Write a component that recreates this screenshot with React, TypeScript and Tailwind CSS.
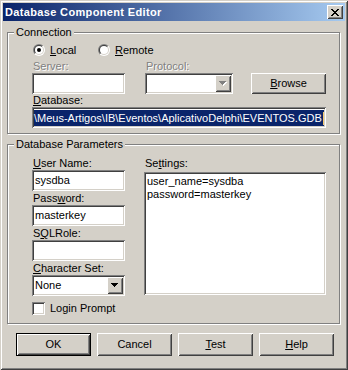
import React from "react";

const FONT = { fontFamily: '"Liberation Sans", Arial, sans-serif' };

const sunken =
  "shadow-[inset_1px_1px_0_#808080,inset_-1px_-1px_0_#ffffff,inset_2px_2px_0_#404040,inset_-2px_-2px_0_#d4d0c8]";
const raised =
  "shadow-[inset_1px_1px_0_#ffffff,inset_-1px_-1px_0_#404040,inset_2px_2px_0_#d4d0c8,inset_-2px_-2px_0_#808080]";

function Radio({ checked }: { checked?: boolean }) {
  return (
    <div className="w-[12px] h-[12px] rounded-full bg-[linear-gradient(135deg,#808080_50%,#ffffff_50%)] p-[1px] shrink-0">
      <div className="w-full h-full rounded-full bg-[linear-gradient(135deg,#404040_50%,#d4d0c8_50%)] p-[1px]">
        <div className="w-full h-full rounded-full bg-white flex items-center justify-center">
          {checked && <div className="w-[4px] h-[4px] rounded-full bg-black" />}
        </div>
      </div>
    </div>
  );
}

function Arrow({ disabled }: { disabled?: boolean }) {
  const c = disabled ? "#808080" : "#000000";
  const rows = [7, 5, 3, 1];
  return (
    <svg width="8" height="5" viewBox="0 0 8 5" shapeRendering="crispEdges">
      {disabled &&
        rows.map((w, i) => (
          <rect key={"s" + i} x={(7 - w) / 2 + 1} y={i + 1} width={w} height={1} fill="#ffffff" />
        ))}
      {rows.map((w, i) => (
        <rect key={i} x={(7 - w) / 2} y={i} width={w} height={1} fill={c} />
      ))}
    </svg>
  );
}

function Combo({ w, value, disabled }: { w: string; value?: string; disabled?: boolean }) {
  return (
    <div className={`relative h-[21px] bg-white ${sunken} ${w} flex items-center pl-[3px] text-[11px] leading-[13px] text-black`}>
      {value}
      <div className={`absolute right-[2px] top-[2px] w-[16px] h-[17px] bg-[#d4d0c8] ${raised} flex items-center justify-center`}>
        <Arrow disabled={disabled} />
      </div>
    </div>
  );
}

function Edit({ w, value }: { w: string; value?: string }) {
  return (
    <div className={`h-[21px] bg-white ${sunken} ${w} flex items-center pl-[3px] text-[11px] leading-[13px] text-black`}>
      {value}
    </div>
  );
}

function Label({ children, disabled, h = "h-[13px]" }: { children: React.ReactNode; disabled?: boolean; h?: string }) {
  return (
    <div
      className={`${h} ml-[1px] text-[11px] leading-[13px] flex items-end whitespace-nowrap ${
        disabled ? "text-[#808080] [text-shadow:1px_1px_0_#ffffff]" : "text-black"
      }`}
    >
      <span>{children}</span>
    </div>
  );
}

function Group({ label, className, children }: { label: string; className: string; children: React.ReactNode }) {
  return (
    <div
      className={`relative w-[333px] border border-[#808080] shadow-[1px_1px_0_#ffffff,inset_1px_1px_0_#ffffff] ${className}`}
    >
      <div className="absolute left-[6px] top-[-7px] px-[2px] bg-[#d4d0c8] text-[11px] leading-[13px] text-black whitespace-nowrap">
        {label}
      </div>
      {children}
    </div>
  );
}

function Button({ children, def }: { children: React.ReactNode; def?: boolean }) {
  return (
    <div
      className={`w-[75px] h-[23px] bg-[#d4d0c8] flex items-center justify-center text-[11px] leading-[13px] text-black ${
        def ? "border border-black" : ""
      } ${raised}`}
    >
      <span>{children}</span>
    </div>
  );
}

function CloseGlyph() {
  const px: [number, number][] = [
    [0, 0], [1, 0], [6, 0], [7, 0],
    [1, 1], [2, 1], [5, 1], [6, 1],
    [2, 2], [3, 2], [4, 2], [5, 2],
    [3, 3], [4, 3],
    [2, 4], [3, 4], [4, 4], [5, 4],
    [1, 5], [2, 5], [5, 5], [6, 5],
    [0, 6], [1, 6], [6, 6], [7, 6],
  ];
  return (
    <svg width="8" height="7" viewBox="0 0 8 7" shapeRendering="crispEdges">
      {px.map(([x, y], i) => (
        <rect key={i} x={x} y={y} width={1} height={1} fill="#000" />
      ))}
    </svg>
  );
}

export default function App() {
  return (
    <div
      className="w-[348px] h-[370px] bg-[#d4d0c8] p-[3px] shadow-[inset_1px_1px_0_#d4d0c8,inset_-1px_-1px_0_#404040,inset_2px_2px_0_#ffffff,inset_-2px_-2px_0_#808080] select-none"
      style={FONT}
    >
      {/* Title bar */}
      <div className="h-[18px] flex items-center justify-between bg-[linear-gradient(90deg,#0a246a,#a6caf0)] pl-[2px] pr-[2px]">
        <span className="text-white font-bold text-[11px] leading-[13px] tracking-[0.35px]">
          Database Component Editor
        </span>
        <div className={`w-[16px] h-[14px] bg-[#d4d0c8] ${raised} flex items-center justify-center`}>
          <CloseGlyph />
        </div>
      </div>

      <div className="pl-[4px] pt-[11px]">
        {/* Connection */}
        <Group label="Connection" className="h-[102px]">
          <div className="pl-[24px] pt-[11px]">
            <div className="flex items-center h-[12px] text-[11px] leading-[13px] text-black">
              <div className="flex items-center w-[65px] ml-[1px]">
                <Radio checked />
                <span className="ml-[5px]">
                  <u>L</u>ocal
                </span>
              </div>
              <div className="flex items-center">
                <Radio />
                <span className="ml-[5px]">
                  <u>R</u>emote
                </span>
              </div>
            </div>
            <div className="flex mt-[4px]">
              <div className="flex flex-col w-[93px]">
                <Label disabled>Server:</Label>
                <Edit w="w-[93px]" />
              </div>
              <div className="flex flex-col w-[88px] ml-[20px]">
                <Label disabled>Protocol:</Label>
                <Combo w="w-[88px]" disabled />
              </div>
              <div className="pt-[13px] ml-[18px]">
                <div className={`w-[75px] h-[21px] bg-[#d4d0c8] ${raised} flex items-center justify-center text-[11px] leading-[13px] text-black`}>
                  <span>
                    <u>B</u>rowse
                  </span>
                </div>
              </div>
            </div>
            <Label>
              <u>D</u>atabase:
            </Label>
            <div className={`h-[21px] w-[294px] bg-white ${sunken} pl-[2px] pr-[3px] flex items-center overflow-hidden`}>
              <span className="relative inline-block h-[16px] leading-[16px] pr-[2px] bg-[#0a246a] text-white text-[11px] whitespace-nowrap">
                \Meus-Artigos\IB\Eventos\AplicativoDelphi\EVENTOS.GDB
                <span className="absolute right-0 top-[2px] w-[1px] h-[13px] bg-[#f5c870]" />
              </span>
            </div>
          </div>
        </Group>

        {/* Database Parameters */}
        <Group label="Database Parameters" className="h-[180px] mt-[10px]">
          <div className="pl-[24px] pt-[11px] flex">
            <div className="flex flex-col w-[93px]">
              <Label h="h-[14px]">
                <u>U</u>ser Name:
              </Label>
              <Edit w="w-[93px]" value="sysdba" />
              <Label h="h-[14px]">
                Pass<u>w</u>ord:
              </Label>
              <Edit w="w-[93px]" value="masterkey" />
              <Label h="h-[14px]">
                S<u>Q</u>LRole:
              </Label>
              <Edit w="w-[93px]" />
              <Label h="h-[14px]">
                <u>C</u>haracter Set:
              </Label>
              <Combo w="w-[93px]" value="None" />
              <div className="flex items-center mt-[6px] h-[13px] text-[11px] leading-[13px] text-black">
                <div className={`w-[13px] h-[13px] bg-white ${sunken}`} />
                <span className="ml-[5px]">Login Prompt</span>
              </div>
            </div>
            <div className="flex flex-col ml-[19px]">
              <div className="h-[16px] ml-[1px] text-[11px] leading-[13px] text-black flex items-start pt-[1px]">
                <span>
                  Se<u>t</u>tings:
                </span>
              </div>
              <div className={`w-[182px] h-[123px] bg-white ${sunken} pl-[3px] pt-[3px] text-[11px] leading-[13px] text-black`}>
                <div>user_name=sysdba</div>
                <div>password=masterkey</div>
              </div>
            </div>
          </div>
        </Group>

        {/* Buttons */}
        <div className="flex gap-[6px] ml-[9px] mt-[9px]">
          <Button def>OK</Button>
          <Button>Cancel</Button>
          <Button>
            <u>T</u>est
          </Button>
          <Button>
            <u>H</u>elp
          </Button>
        </div>
      </div>
    </div>
  );
}
